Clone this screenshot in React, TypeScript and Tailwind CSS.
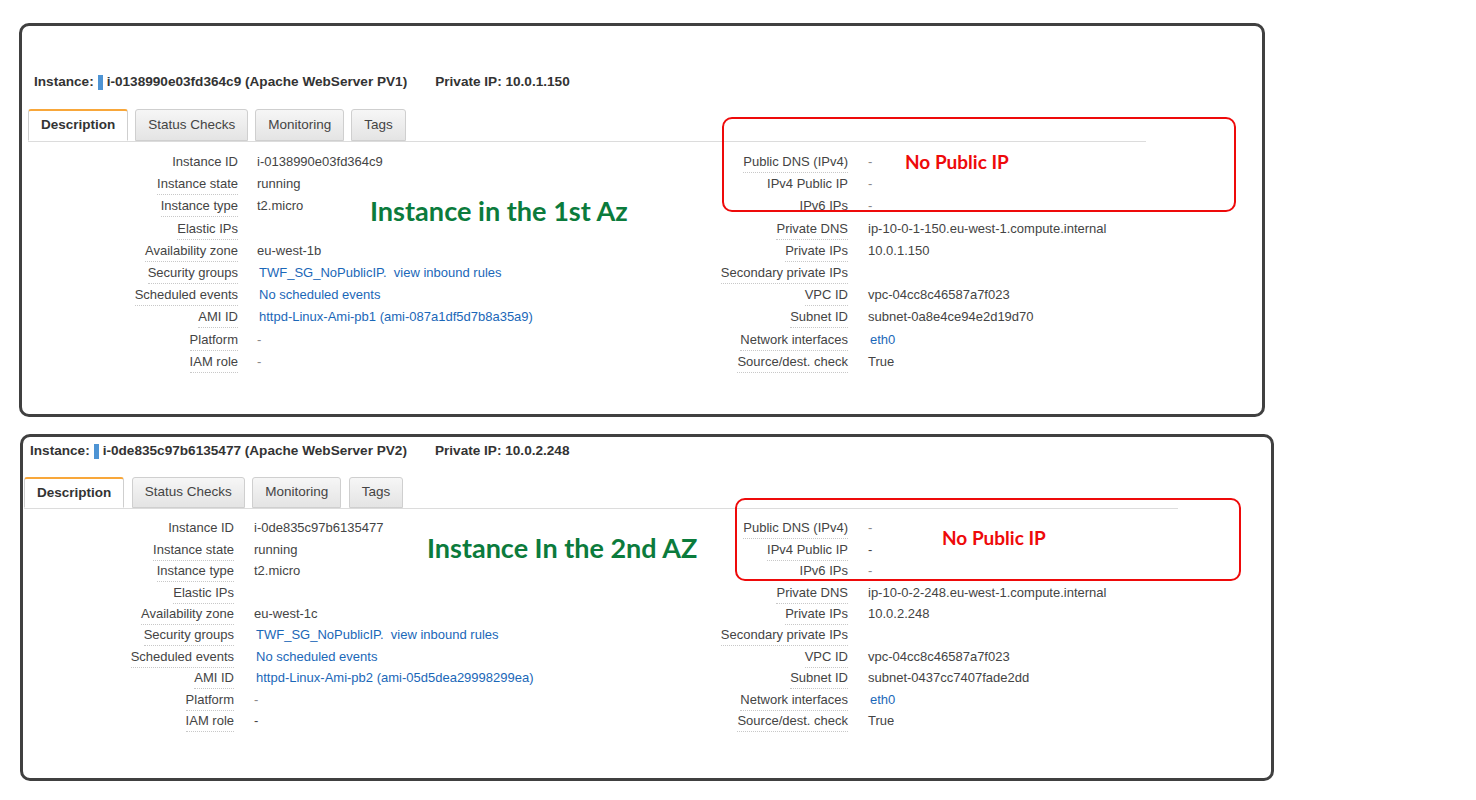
import React from "react";

type Row = { label: string; value: string; link?: boolean; dim?: boolean; noLine?: boolean };

const Tab = ({ label, active, h }: { label: string; active?: boolean; h: string }) =>
  active ? (
    <div
      className={`${h} px-[12px] flex items-center bg-white border border-[#cfcfcf] border-t-2 border-t-[#f8a73a] border-b-white rounded-t-[3px] mb-[-1px] text-[13.5px] font-bold text-[#333]`}
    >
      {label}
    </div>
  ) : (
    <div
      className={`${h} px-[12px] flex items-center bg-gradient-to-b from-[#f6f6f6] to-[#e4e4e4] border border-[#cfcfcf] rounded-t-[3px] text-[13.5px] text-[#444]`}
    >
      {label}
    </div>
  );

const Table = ({
  rows,
  labelW,
  valueW,
  gap,
  rowH,
}: {
  rows: Row[];
  labelW: string;
  valueW: string;
  gap: string;
  rowH: string;
}) => (
  <div className="flex flex-col">
    {rows.map((r, i) => (
      <div key={i} className={`flex ${rowH} items-center`}>
        <div className={`${labelW} shrink-0 flex justify-end`}>
          <span
            className={`block leading-[16px] text-[13px] text-[#444] pb-[2px] border-b border-dotted whitespace-nowrap ${
              r.noLine ? "border-transparent" : "border-[#c8c8c8]"
            }`}
          >
            {r.label}
          </span>
        </div>
        <div
          className={`${valueW} ${gap} text-[13px] leading-[16px] pb-[3px] whitespace-pre ${
            r.link ? "text-[#1a67b8] ml-[2px]" : r.dim ? "text-[#888]" : "text-[#444]"
          }`}
        >
          {r.value}
        </div>
      </div>
    ))}
  </div>
);

const left1: Row[] = [
  { label: "Instance ID", value: "i-0138990e03fd364c9", noLine: true },
  { label: "Instance state", value: "running" },
  { label: "Instance type", value: "t2.micro" },
  { label: "Elastic IPs", value: "" },
  { label: "Availability zone", value: "eu-west-1b" },
  { label: "Security groups", value: "TWF_SG_NoPublicIP.  view inbound rules", link: true },
  { label: "Scheduled events", value: "No scheduled events", link: true },
  { label: "AMI ID", value: "httpd-Linux-Ami-pb1 (ami-087a1df5d7b8a35a9)", link: true },
  { label: "Platform", value: "-", dim: true },
  { label: "IAM role", value: "-", dim: true },
];
const right1: Row[] = [
  { label: "Public DNS (IPv4)", value: "-", dim: true },
  { label: "IPv4 Public IP", value: "-", dim: true, noLine: true },
  { label: "IPv6 IPs", value: "-", dim: true, noLine: true },
  { label: "Private DNS", value: "ip-10-0-1-150.eu-west-1.compute.internal" },
  { label: "Private IPs", value: "10.0.1.150" },
  { label: "Secondary private IPs", value: "" },
  { label: "VPC ID", value: "vpc-04cc8c46587a7f023" },
  { label: "Subnet ID", value: "subnet-0a8e4ce94e2d19d70" },
  { label: "Network interfaces", value: "eth0", link: true },
  { label: "Source/dest. check", value: "True" },
];
const left2: Row[] = [
  { label: "Instance ID", value: "i-0de835c97b6135477", noLine: true },
  { label: "Instance state", value: "running" },
  { label: "Instance type", value: "t2.micro" },
  { label: "Elastic IPs", value: "" },
  { label: "Availability zone", value: "eu-west-1c" },
  { label: "Security groups", value: "TWF_SG_NoPublicIP.  view inbound rules", link: true },
  { label: "Scheduled events", value: "No scheduled events", link: true },
  { label: "AMI ID", value: "httpd-Linux-Ami-pb2 (ami-05d5dea29998299ea)", link: true },
  { label: "Platform", value: "-", dim: true },
  { label: "IAM role", value: "-" },
];
const right2: Row[] = [
  { label: "Public DNS (IPv4)", value: "-", dim: true },
  { label: "IPv4 Public IP", value: "-" },
  { label: "IPv6 IPs", value: "-", dim: true, noLine: true },
  { label: "Private DNS", value: "ip-10-0-2-248.eu-west-1.compute.internal" },
  { label: "Private IPs", value: "10.0.2.248" },
  { label: "Secondary private IPs", value: "" },
  { label: "VPC ID", value: "vpc-04cc8c46587a7f023" },
  { label: "Subnet ID", value: "subnet-0437cc7407fade2dd" },
  { label: "Network interfaces", value: "eth0", link: true },
  { label: "Source/dest. check", value: "True" },
];

const Header = ({ id, ip }: { id: string; ip: string }) => (
  <div className="flex items-center h-[16px] text-[13.6px] font-bold text-[#333] whitespace-nowrap">
    <span>Instance:</span>
    <span className="inline-block w-[5px] h-[15px] bg-[#4e94d4] ml-[4px] mr-[4px]" />
    <span>{id}</span>
    <span className="ml-[28px]">{ip}</span>
  </div>
);

export default function App() {
  return (
    <div className="w-[1476px] h-[800px] bg-white font-['Liberation_Sans',Arial,sans-serif] pt-[23px] overflow-hidden">
      {/* Panel 1 */}
      <div className="relative ml-[19px] w-[1246px] h-[394px] border-[3px] border-[#404040] rounded-[10px]">
        <div className="pl-[12px] mt-[48px]">
          <Header id="i-0138990e03fd364c9 (Apache WebServer PV1)" ip="Private IP: 10.0.1.150" />
        </div>
        <div className="ml-[6px] mt-[19px] w-[1118px] flex gap-[7px] border-b border-[#dcdcdc]">
          <Tab h="h-[32px]" label="Description" active />
          <Tab h="h-[32px]" label="Status Checks" />
          <Tab h="h-[32px]" label="Monitoring" />
          <Tab h="h-[32px]" label="Tags" />
        </div>
        <div className="flex mt-[10.5px]">
          <Table rows={left1} labelW="w-[216px]" valueW="w-[460px]" gap="pl-[19px]" rowH="h-[22.2px]" />
          <Table rows={right1} labelW="w-[148px]" valueW="w-[380px]" gap="pl-[20px]" rowH="h-[22.2px]" />
        </div>
        <div className="absolute left-[348px] top-[169px] leading-[32px] text-[27.1px] font-bold text-[#0b7b3c] font-['Lato',sans-serif] whitespace-nowrap">
          Instance in the 1st Az
        </div>
        <div className="absolute left-[700px] top-[91px] w-[514px] h-[95px] border-[2.5px] border-[#ee0a0a] rounded-[10px]" />
        <div className="absolute left-[883px] top-[124px] leading-[24px] text-[19px] font-bold text-[#ee0a0a] font-['Lato',sans-serif] whitespace-nowrap">
          No Public IP
        </div>
      </div>

      {/* Panel 2 */}
      <div className="relative mt-[17px] ml-[20px] w-[1254px] h-[347px] border-[3px] border-[#404040] rounded-[10px]">
        <div className="pl-[7px] pt-[6px]">
          <Header id="i-0de835c97b6135477 (Apache WebServer PV2)" ip="Private IP: 10.0.2.248" />
        </div>
        <div className="ml-[1px] mt-[18px] w-[1154px] flex gap-[7.5px] border-b border-[#dcdcdc]">
          <Tab h="h-[31px]" label="Description" active />
          <Tab h="h-[31px]" label="Status Checks" />
          <Tab h="h-[31px]" label="Monitoring" />
          <Tab h="h-[31px]" label="Tags" />
        </div>
        <div className="flex mt-[10px]">
          <Table rows={left2} labelW="w-[211px]" valueW="w-[464px]" gap="pl-[20px]" rowH="h-[21.45px]" />
          <Table rows={right2} labelW="w-[148px]" valueW="w-[380px]" gap="pl-[20px]" rowH="h-[21.45px]" />
        </div>
        <div className="absolute left-[404px] top-[95px] leading-[32px] text-[27px] font-bold text-[#0b7b3c] font-['Lato',sans-serif] whitespace-nowrap">
          Instance In the 2nd AZ
        </div>
        <div className="absolute left-[712px] top-[61px] w-[506px] h-[83px] border-[2.5px] border-[#ee0a0a] rounded-[10px]" />
        <div className="absolute left-[919px] top-[89px] leading-[24px] text-[19px] font-bold text-[#ee0a0a] font-['Lato',sans-serif] whitespace-nowrap">
          No Public IP
        </div>
      </div>
    </div>
  );
}
